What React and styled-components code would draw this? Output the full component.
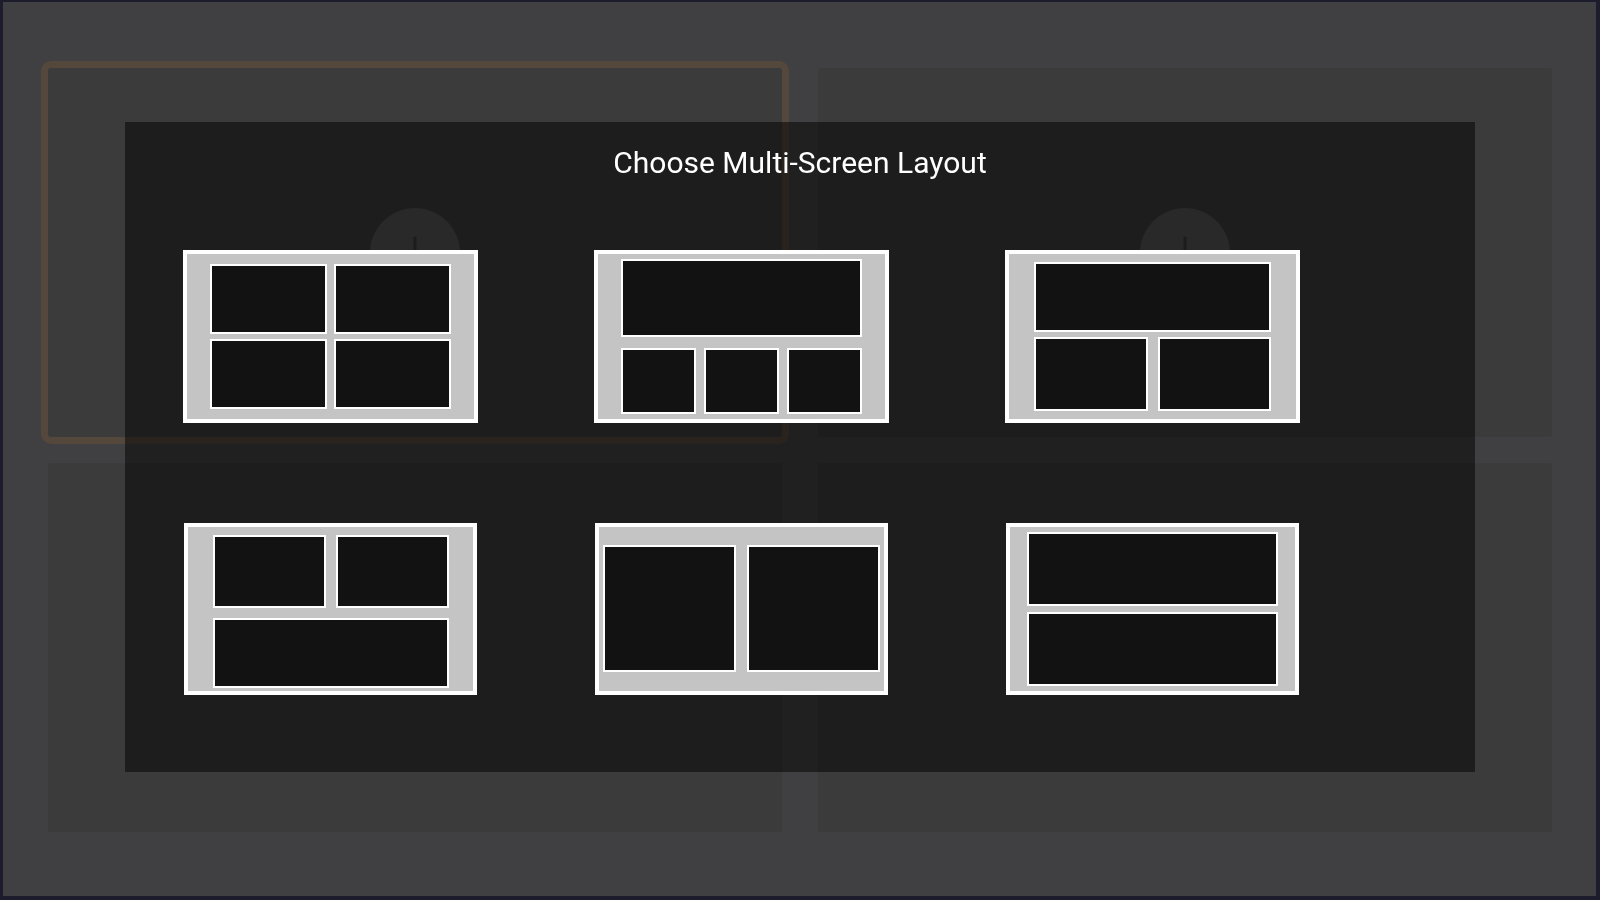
import React from 'react';
import styled, { createGlobalStyle } from 'styled-components';

const GlobalStyle = createGlobalStyle`
  html, body { margin: 0; padding: 0; background: #1d1c2c; }
  body { font-family: Roboto, "Noto Sans", sans-serif; overflow: hidden; }
  *, *::before, *::after { box-sizing: border-box; }
`;

const Frame = styled.div`
  width: 1600px;
  height: 900px;
  padding: 2px 4px 4px 3px;
`;

const Screen = styled.main`
  height: 100%;
  background: #404042;
  padding: 66px 44px 64px 45px;
  display: grid;
  grid-template-columns: 1fr 1fr;
  grid-template-rows: 1fr 1fr;
  column-gap: 36px;
  row-gap: 26px;
`;

const Panel = styled.div`
  background: #3b3b3b;
  border-radius: 3px;
  display: flex;
  align-items: center;
  justify-content: center;
  outline: ${(p) => (p.$selected ? '7px solid #54473b' : 'none')};
`;

const AddButton = styled.div`
  width: 90px;
  height: 90px;
  border-radius: 50%;
  background: #525252;
  display: flex;
  align-items: center;
  justify-content: center;
`;

const Overlay = styled.div`
  position: fixed;
  inset: 0;
  display: flex;
  justify-content: center;
  align-items: flex-start;
  padding-top: 122px;
`;

const Dialog = styled.section`
  width: 1350px;
  height: 650px;
  background: rgba(0, 0, 0, 0.5);
  padding-top: 23px;
`;

const Title = styled.h2`
  margin: 0;
  font-family: Roboto, "Noto Sans", sans-serif;
  font-weight: 400;
  font-size: 30px;
  line-height: 36px;
  color: #ffffff;
  text-align: center;
`;

const LayoutGrid = styled.div`
  margin-top: 69px;
  padding-left: 58px;
  display: grid;
  grid-template-columns: repeat(3, 295px);
  grid-auto-rows: 173px;
  column-gap: 116px;
  row-gap: 100px;
`;

const Tile = styled.button`
  appearance: none;
  margin: 0;
  justify-self: ${(p) => (p.$compact ? 'center' : 'start')};
  align-self: start;
  width: ${(p) => (p.$compact ? 293 : 295)}px;
  height: ${(p) => (p.$compact ? 172 : 173)}px;
  border: 4px solid #ffffff;
  border-radius: 0;
  background: #c4c4c4;
  cursor: pointer;
  padding: ${(p) => p.$pad};
  display: grid;
  grid-template-columns: ${(p) => p.$cols};
  grid-template-rows: ${(p) => p.$rows};
  grid-template-areas: ${(p) => p.$areas};
  column-gap: ${(p) => p.$cgap || 0}px;
  row-gap: ${(p) => p.$rgap || 0}px;
`;

const Pane = styled.div`
  grid-area: ${(p) => p.$area};
  background: #121212;
  border: 2px solid #ffffff;
`;

const layouts = [
  { id: 'quad', pad: '10px 23px', cols: '1fr 1fr', rows: '1fr 1fr', cgap: 7, rgap: 5, areas: '"a b" "c d"', panes: ['a', 'b', 'c', 'd'] },
  { id: 'one-three', pad: '5px 23px', cols: '1fr 1fr 1fr', rows: '78px 1fr', cgap: 8, rgap: 11, areas: '"m m m" "a b c"', panes: ['m', 'a', 'b', 'c'] },
  { id: 'one-two', pad: '8px 25px', cols: '1fr 1fr', rows: '70px 1fr', cgap: 10, rgap: 5, areas: '"m m" "a b"', panes: ['m', 'a', 'b'] },
  { id: 'two-one', compact: true, pad: '8px 24px 3px 25px', cols: '1fr 1fr', rows: '73px 1fr', cgap: 10, rgap: 10, areas: '"a b" "m m"', panes: ['a', 'b', 'm'] },
  { id: 'side-by-side', compact: true, pad: '18px 4px 19px', cols: '1fr 1fr', rows: '1fr', cgap: 11, rgap: 0, areas: '"a b"', panes: ['a', 'b'] },
  { id: 'stacked', compact: true, pad: '5px 17px', cols: '1fr', rows: '1fr 1fr', cgap: 0, rgap: 6, areas: '"a" "b"', panes: ['a', 'b'] },
];

function PlusIcon() {
  return (
    <svg width="34" height="34" viewBox="0 0 34 34" fill="none">
      <path d="M17 2v30M2 17h30" stroke="#383838" strokeWidth="3" strokeLinecap="round" />
    </svg>
  );
}

export default function App() {
  return (
    <>
      <GlobalStyle />
      <Frame>
        <Screen>
          {[0, 1, 2, 3].map((i) => (
            <Panel key={i} $selected={i === 0}>
              <AddButton>
                <PlusIcon />
              </AddButton>
            </Panel>
          ))}
        </Screen>
      </Frame>
      <Overlay>
        <Dialog>
          <Title>Choose Multi-Screen Layout</Title>
          <LayoutGrid>
            {layouts.map((l) => (
              <Tile
                key={l.id}
                $compact={l.compact}
                $pad={l.pad}
                $cols={l.cols}
                $rows={l.rows}
                $cgap={l.cgap}
                $rgap={l.rgap}
                $areas={l.areas}
                aria-label={l.id}
              >
                {l.panes.map((a) => (
                  <Pane key={a} $area={a} />
                ))}
              </Tile>
            ))}
          </LayoutGrid>
        </Dialog>
      </Overlay>
    </>
  );
}
